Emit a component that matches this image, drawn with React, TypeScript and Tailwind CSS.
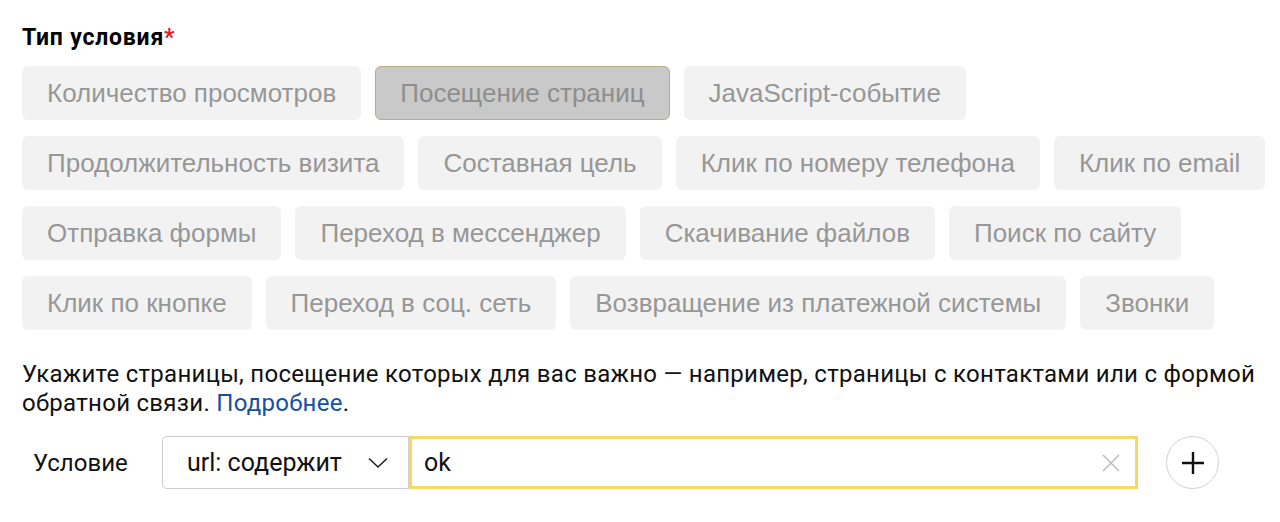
import React from "react";

const rows: string[][] = [
  ["Количество просмотров", "Посещение страниц", "JavaScript-событие"],
  ["Продолжительность визита", "Составная цель", "Клик по номеру телефона", "Клик по email"],
  ["Отправка формы", "Переход в мессенджер", "Скачивание файлов", "Поиск по сайту"],
  ["Клик по кнопке", "Переход в соц. сеть", "Возвращение из платежной системы", "Звонки"],
];

export default function App() {
  return (
    <div className="w-[1280px] h-[522px] bg-white pl-[22px] pt-[24px] overflow-hidden">
      <div className="text-[23px] font-bold text-black leading-[28px] tracking-[0.8px]" style={{ fontFamily: "Roboto, sans-serif" }}>
        Тип условия<span className="text-[#e02020]">*</span>
      </div>
      <div className="mt-[14px] flex flex-col gap-[16px]">
        {rows.map((row, i) => (
          <div key={i} className="flex gap-[14px]">
            {row.map((label) => {
              const sel = label === "Посещение страниц";
              return (
                <div
                  key={label}
                  className={
                    sel
                      ? "h-[54px] px-[24px] flex items-center rounded-[6px] bg-[#c9c9c9] border border-[#b9ab82] text-[#8e8e8e] text-[26px]"
                      : "h-[54px] px-[25px] flex items-center rounded-[6px] bg-[#f2f2f2] text-[#979797] text-[26px]"
                  }
                  style={{ fontFamily: '"Liberation Sans", Arial, sans-serif' }}
                >
                  {label}
                </div>
              );
            })}
          </div>
        ))}
      </div>
      <p className="mt-[30px] text-[24px] leading-[29px] text-[#111] w-[1258px] tracking-[0.28px] whitespace-nowrap" style={{ fontFamily: "Roboto, sans-serif" }}>
        Укажите страницы, посещение которых для вас важно — например, страницы с контактами или с формой
        <br />
        обратной связи. <span className="text-[#1650a3]">Подробнее</span>.
      </p>
      <div className="mt-[18px] flex items-center" style={{ fontFamily: "Roboto, sans-serif" }}>
        <div className="w-[140px] pl-[11px] text-[24px] text-[#111]">Условие</div>
        <div className="h-[53px] w-[247px] border border-[#cfcfcf] rounded-l-[5px] flex items-center pl-[24px] pr-[20px] justify-between text-[25px] text-[#111]">
          <span>url: содержит</span>
          <svg width="20" height="12" viewBox="0 0 20 12" fill="none">
            <path d="M1 1.5 L10 10 L19 1.5" stroke="#222" strokeWidth="1.6" />
          </svg>
        </div>
        <div className="h-[53px] w-[729px] border-[3px] border-[#f6d965] flex items-center pl-[12px] pr-[14px] justify-between text-[25px] text-[#111]">
          <span>ok</span>
          <svg width="20" height="20" viewBox="0 0 20 20" fill="none">
            <path d="M2 2 L18 18 M18 2 L2 18" stroke="#bcbcbc" strokeWidth="1.5" />
          </svg>
        </div>
        <div className="ml-[28px] w-[53px] h-[53px] rounded-full border border-[#d2d2d2] flex items-center justify-center">
          <svg width="24" height="24" viewBox="0 0 24 24" fill="none">
            <path d="M12 1 V23 M1 12 H23" stroke="#111" strokeWidth="2.4" />
          </svg>
        </div>
      </div>
    </div>
  );
}
